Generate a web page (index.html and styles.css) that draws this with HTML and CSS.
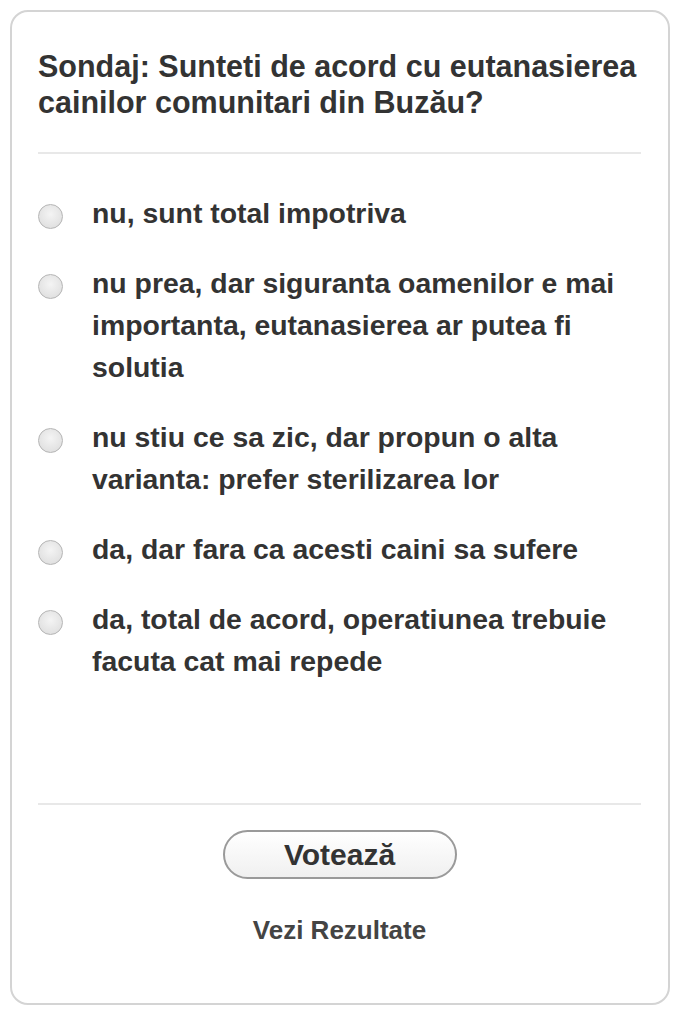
FILE: index.html
```html
<!DOCTYPE html>
<html lang="ro">
<head>
<meta charset="utf-8">
<title>Sondaj</title>
<link rel="stylesheet" href="styles.css">
</head>
<body>
<div class="card">
  <h2 class="title">Sondaj: Sunteti de acord cu eutanasierea cainilor comunitari din Buzău?</h2>
  <hr class="sep">
  <ul class="options">
    <li class="option"><span class="radio"></span><span class="label">nu, sunt total impotriva</span></li>
    <li class="option"><span class="radio"></span><span class="label">nu prea, dar siguranta oamenilor e mai importanta, eutanasierea ar putea fi solutia</span></li>
    <li class="option"><span class="radio"></span><span class="label">nu stiu ce sa zic, dar propun o alta varianta: prefer sterilizarea lor</span></li>
    <li class="option"><span class="radio"></span><span class="label">da, dar fara ca acesti caini sa sufere</span></li>
    <li class="option"><span class="radio"></span><span class="label">da, total de acord, operatiunea trebuie facuta cat mai repede</span></li>
  </ul>
  <hr class="sep sep-bottom">
  <div class="actions">
    <button class="vote">Votează</button>
    <a class="results">Vezi Rezultate</a>
  </div>
</div>
</body>
</html>
```
FILE: styles.css
```css
html, body {
  margin: 0;
  padding: 0;
  background: #ffffff;
}
body {
  padding: 10px 12px 0 10px;
  font-family: "Liberation Sans", Arial, sans-serif;
  color: #333333;
}
.card {
  box-sizing: border-box;
  width: 660px;
  height: 995px;
  border: 2px solid #d4d4d4;
  border-radius: 18px;
  padding: 36px 27px 0 26px;
  display: flex;
  flex-direction: column;
}
.title {
  margin: 0;
  font-size: 30.5px;
  line-height: 36px;
  font-weight: bold;
  color: #333333;
}
.sep {
  border: 0;
  border-top: 2px solid #e8e8e8;
  margin: 32px 0 0 0;
  height: 0;
}
.options {
  list-style: none;
  margin: 38px 0 0 0;
  padding: 0;
  display: flex;
  flex-direction: column;
  gap: 28px;
}
.option {
  display: flex;
  align-items: flex-start;
}
.radio {
  flex: none;
  box-sizing: border-box;
  width: 25px;
  height: 25px;
  margin: 12px 0 0 0;
  border-radius: 50%;
  border: 1.5px solid #b5b5b5;
  background: radial-gradient(circle at 50% 40%, #f4f4f4 0%, #e2e2e2 70%, #d6d6d6 100%);
}
.label {
  margin-left: 29px;
  font-size: 28.4px;
  line-height: 42px;
  font-weight: bold;
  color: #333333;
}
.sep-bottom {
  margin-top: auto;
}
.actions {
  display: flex;
  flex-direction: column;
  align-items: center;
  padding: 25px 0 58px 0;
}
.vote {
  box-sizing: border-box;
  width: 234px;
  height: 49px;
  border: 2px solid #9a9a9a;
  border-radius: 25px;
  background: linear-gradient(#ffffff, #f0f0f0);
  font-family: "Liberation Sans", Arial, sans-serif;
  font-size: 30px;
  font-weight: bold;
  color: #333333;
  padding: 0;
}
.results {
  margin-top: 36px;
  font-size: 26px;
  line-height: 30px;
  font-weight: bold;
  color: #444444;
  text-decoration: none;
}
```
